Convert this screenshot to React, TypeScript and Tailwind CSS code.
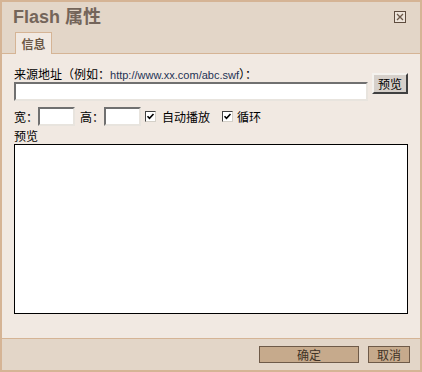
import { useState } from 'react'

const cjk = { fontFamily: '"Noto Sans CJK SC", "Liberation Sans", sans-serif' }

const Check = ({ checked, onToggle }: { checked: boolean; onToggle: () => void }) => (
    <button type="button" onClick={onToggle} className="flex h-[11px] w-[11px] items-center justify-center border border-t-[#404040] border-l-[#404040] border-r-[#d4d0c8] border-b-[#d4d0c8] bg-white p-0">
        {checked && (
            <svg width="9" height="9" viewBox="0 0 9 9">
                <path d="M1.5 4.2 L3.5 6.3 L7.5 2" fill="none" stroke="#000" strokeWidth="1.6" />
            </svg>
        )}
    </button>
)

export default function App() {
    const [auto, setAuto] = useState(true)
    const [loop, setLoop] = useState(true)

    return (
        <div style={cjk} className="flex h-[372px] w-[422px] flex-col border-2 border-[#d5b495] bg-[#f1e9e2] text-[12px] text-black">
            <div className="flex h-[52px] flex-col border-b border-[#d5b495] bg-[#e3d6c8]">
                <div className="flex items-start justify-between pr-[14px] pl-[11px]">
                    <h1 className="mt-[3px] text-[18px] leading-[24px] font-bold text-[#74655a]" style={{ fontFamily: '"Liberation Sans", "Noto Sans CJK SC", sans-serif' }}>
                        Flash 属性
                    </h1>
                    <button type="button" className="mt-[9px] flex h-[12px] w-[12px] items-center justify-center border border-[#5e4c3e] bg-[#ede4da] p-0">
                        <svg width="8" height="8" viewBox="0 0 8 8">
                            <path d="M1 1 L7 7 M7 1 L1 7" stroke="#6b5848" strokeWidth="1.3" />
                        </svg>
                    </button>
                </div>
                <div className="relative mt-auto -mb-px ml-[13px] flex h-[22px] w-[37px] items-center justify-center border border-b-0 border-[#d5b495] bg-[#f1e9e2] font-bold text-[#6b5847]">
                    信息
                </div>
            </div>

            <div className="flex flex-1 flex-col px-[12px] pt-[12px]">
                <div className="flex gap-[4px]">
                    <div className="flex flex-1 flex-col">
                        <div className="h-[16px] leading-[16px] whitespace-nowrap">
                            来源地址（例如：<span className="text-[11px] text-[#1f3355]" style={{ fontFamily: '"Liberation Sans", sans-serif' }}>http://www.xx.com/abc.swf</span>）：
                        </div>
                        <input type="text" className="h-[19px] w-full border-2 border-t-[#707070] border-l-[#707070] border-r-[#e8e4de] border-b-[#e8e4de] bg-white px-1 outline-none" />
                    </div>
                    <button type="button" className="mt-[7px] h-[21px] w-[36px] border-2 border-t-[#f4f2ee] border-l-[#f4f2ee] border-r-[#404040] border-b-[#404040] bg-[#d6d0ca] p-0 text-[12px] leading-none">
                        预览
                    </button>
                </div>

                <div className="mt-[6px] flex h-[19px] items-center">
                    <span className="w-[24px]">宽：</span>
                    <input type="text" className="h-[19px] w-[37px] border-2 border-t-[#707070] border-l-[#707070] border-r-[#e8e4de] border-b-[#e8e4de] bg-white outline-none" />
                    <span className="ml-[5px] w-[24px]">高：</span>
                    <input type="text" className="h-[19px] w-[37px] border-2 border-t-[#707070] border-l-[#707070] border-r-[#e8e4de] border-b-[#e8e4de] bg-white outline-none" />
                    <span className="ml-[4px] flex items-center gap-[6px]">
                        <Check checked={auto} onToggle={() => setAuto(!auto)} />
                        自动播放
                    </span>
                    <span className="ml-[12px] flex items-center gap-[4px]">
                        <Check checked={loop} onToggle={() => setLoop(!loop)} />
                        循环
                    </span>
                </div>

                <div className="mt-[1px] h-[17px] leading-[17px]">预览</div>
                <div className="h-[170px] border border-black bg-white" />
            </div>

            <div className="flex h-[32px] items-start justify-end gap-[9px] border-t border-[#d5b495] bg-[#e3d6c8] pt-[7px] pr-[10px]">
                <button type="button" className="h-[17px] w-[100px] border border-[#6e5a48] bg-[#c6aa8c] p-0 text-[12px] leading-none text-[#3f3226]">
                    确定
                </button>
                <button type="button" className="h-[17px] w-[42px] border border-[#6e5a48] bg-[#c6aa8c] p-0 text-[12px] leading-none text-[#3f3226]">
                    取消
                </button>
            </div>
        </div>
    )
}
